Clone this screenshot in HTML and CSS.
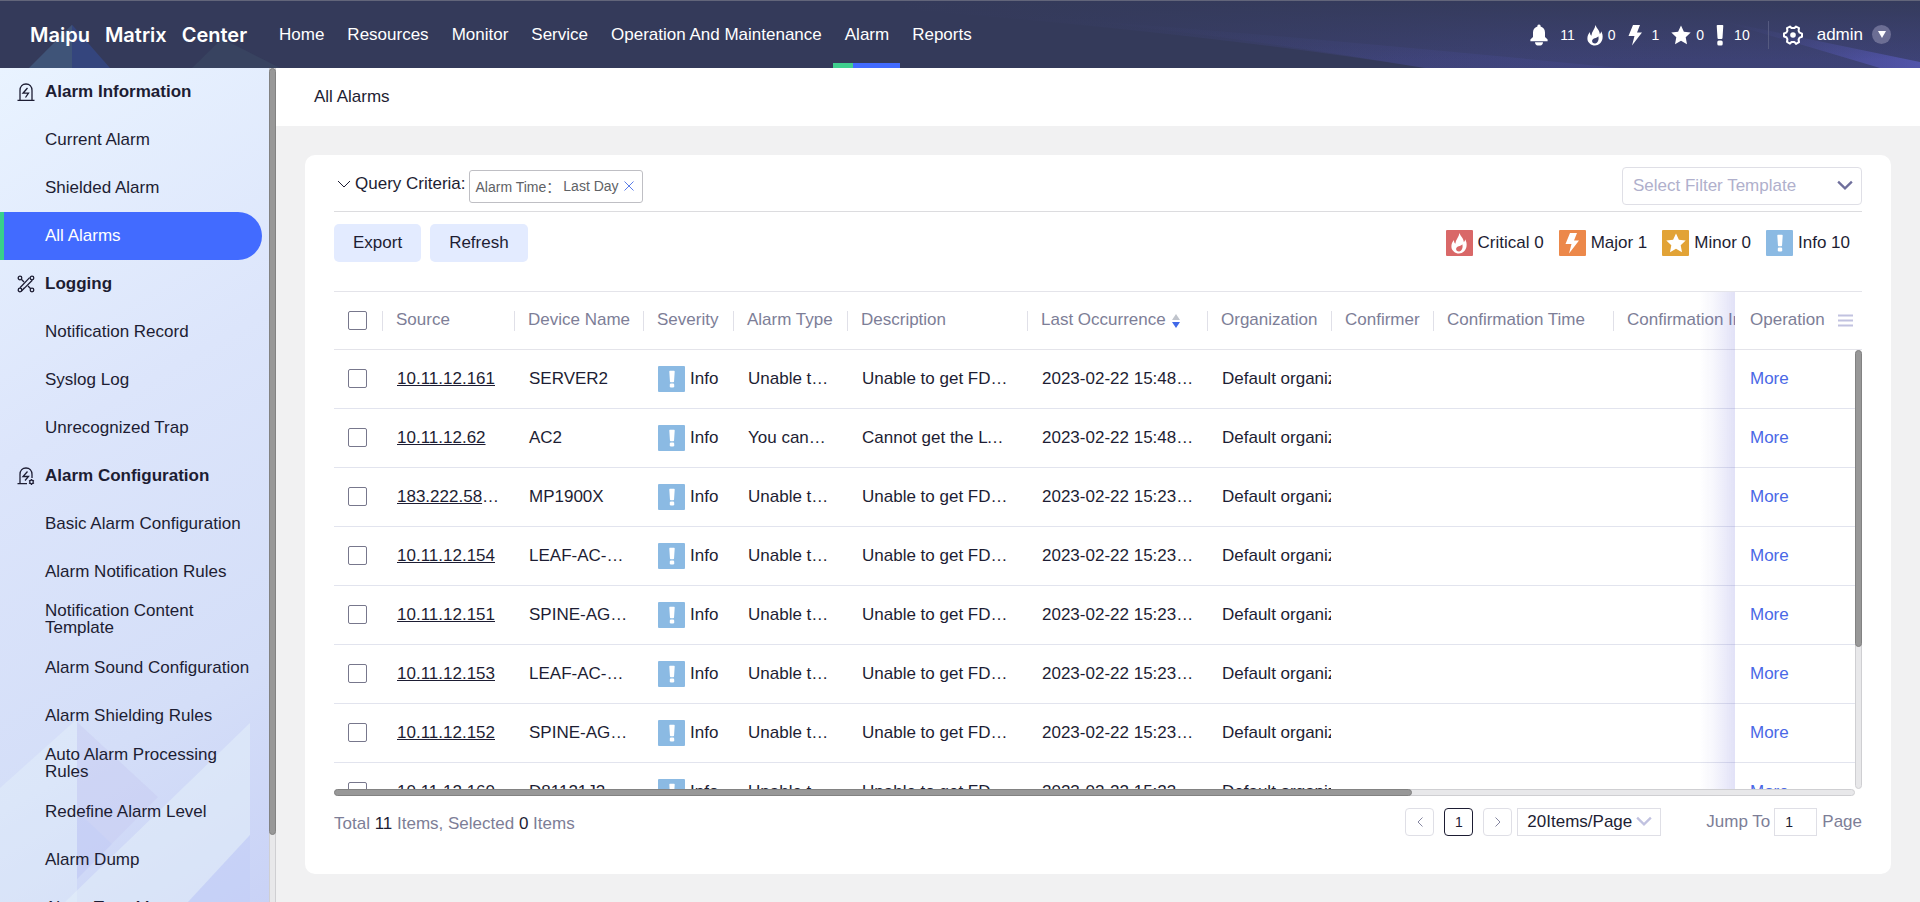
FILE: index.html
```html
<!DOCTYPE html>
<html lang="en">
  <head>
    <meta charset="UTF-8" />
    <meta name="viewport" content="width=device-width, initial-scale=1.0" />
    <title>Maipu Matrix Center</title>
    <link rel="stylesheet" href="styles.css" />
  </head>
  <body>
    <!-- shared icons -->
    <svg class="sprite" aria-hidden="true">
      <symbol id="i-bell" viewBox="0 0 18 22">
        <path d="M9 0.5a1.6 1.6 0 0 1 1.6 1.9C13.6 3.2 15 5.6 15 8.6V13l2.6 2.6v1.6H0.4v-1.6L3 13V8.6c0-3 1.400-5.400 4.400-6.200A1.600 1.600 0 0 1 9 0.500zM5 18.300h8c0 2-1.200 3.200-2.600 3.200H7.600C6.200 21.500 5 20.300 5 18.300z" />
      </symbol>
      <symbol id="i-flame" viewBox="0 0 16 22">
        <path d="M8.500 1c0.800 3 4.200 5.200 4.300 9 0.900-0.700 1.300-1.500 1.400-2.700C15.300 9.500 16 11.600 15.500 14.500 14.800 18.600 11.800 21.500 8 21.500S0.500 18.600 0.400 14.700C0.300 12 1.300 9.800 3 8c0 1.800 0.300 2.800 1.300 3.700C4.800 7.500 8 5 8.500 1zM11.300 12.300c-0.700 1.300-2.200 1.500-3.700 2-1.700 0.600-2.600 1.700-2.500 3 0.200 1.500 1.500 2.300 3 2.200 2.600-0.200 4.200-3.700 3.200-7.200z" />
      </symbol>
      <symbol id="i-bolt" viewBox="0 0 14 22">
        <path d="M5 1h7L9 8.500h5L4 21.500l2.500-9.500H0.500z" />
      </symbol>
      <symbol id="i-star" viewBox="0 0 20 20">
        <path d="M10 0.500l2.900 6.300 6.800 0.800-5 4.700 1.300 6.900L10 15.800l-6 3.400 1.300-6.900-5-4.700 6.800-0.800z" />
      </symbol>
      <symbol id="i-mark" viewBox="0 0 8 22">
        <path d="M1.500 1h5a0.800 0.800 0 0 1 0.800 0.800L6.500 14a1 1 0 0 1-1 0.900h-3a1 1 0 0 1-1-0.900L0.700 1.800A0.800 0.800 0 0 1 1.500 1z" />
        <rect x="1.300" y="16.500" width="5.400" height="5" rx="1.500" />
      </symbol>
      <symbol id="i-down" viewBox="0 0 14 10">
        <path d="M1 2l6 6 6-6" fill="none" stroke="currentColor" />
      </symbol>
    </svg>

    <header class="topbar">
      <svg class="topbar-art" viewBox="0 0 1920 68" preserveAspectRatio="none" aria-hidden="true">
        <defs>
          <linearGradient id="beam" x1="0" x2="1">
            <stop offset="0" stop-color="#4c4fa0" stop-opacity="0" />
            <stop offset="0.6" stop-color="#4c4fa0" stop-opacity="0.35" />
            <stop offset="1" stop-color="#4c4fa0" stop-opacity="0.4" />
          </linearGradient>
          <linearGradient id="corner" x1="0" x2="1">
            <stop offset="0" stop-color="#5a5cc0" stop-opacity="0" />
            <stop offset="1" stop-color="#5a5cc0" stop-opacity="0.7" />
          </linearGradient>
          <linearGradient id="shade" x1="0" y1="0" x2="0" y2="1">
            <stop offset="0" stop-color="#343a5a" stop-opacity="0.9" />
            <stop offset="1" stop-color="#343a5a" stop-opacity="0" />
          </linearGradient>
        </defs>
        <path d="M29 68L72 24V68z" fill="#3f5478" />
        <path d="M72 24L110 68H72z" fill="#34457d" />
        <path d="M192 68L222 38L280 68z" fill="#384360" />
        <path d="M900 8Q1200 32 1425 68H1920V0H900z" fill="url(#beam)" />
        <path d="M1060 18Q1300 36 1620 68H1425Q1240 36 1060 18z" fill="url(#beam)" fill-opacity="0.6" />
        <path d="M1720 20L1920 62V68H1880Q1800 44 1720 20z" fill="url(#corner)" />
        <path d="M900 0H1920V60H900z" fill="url(#shade)" />
      </svg>
      <div class="logo"><span>Maipu</span><span>Matrix</span><span>Center</span></div>
      <nav class="mainnav">
        <a href="#">Home</a>
        <a href="#">Resources</a>
        <a href="#">Monitor</a>
        <a href="#">Service</a>
        <a href="#">Operation And Maintenance</a>
        <a href="#" class="active">Alarm</a>
        <a href="#">Reports</a>
      </nav>
      <div class="counters">
        <span class="counter counter-all"><svg width="18" height="22"><use href="#i-bell" /></svg>11</span>
        <span class="counter"><svg width="16" height="22"><use href="#i-flame" /></svg>0</span>
        <span class="counter counter-wide"><svg width="14" height="22"><use href="#i-bolt" /></svg>1</span>
        <span class="counter"><svg width="20" height="20"><use href="#i-star" /></svg>0</span>
        <span class="counter counter-wide"><svg width="8" height="22"><use href="#i-mark" /></svg>10</span>
      </div>
      <div class="user">
        <button class="icon-btn" aria-label="Settings">
          <svg width="20" height="20" viewBox="0 0 20 20">
            <path d="M7 1.500L8.500 3h3L13 1.500l3 1.700-0.400 2.600 1 1.900 2.400 1v3l-2.400 0.900-1 1.900 0.400 2.600-3 1.800L11.500 17h-3L7 18.600l-3-1.800 0.400-2.600-1-1.900L1 11.500v-3l2.400-0.900 1-1.800L4 3.200z" fill="none" stroke="#fff" stroke-width="2" stroke-linejoin="round" />
            <circle cx="10" cy="10" r="2.800" fill="#fff" />
          </svg>
        </button>
        <span>admin</span>
        <button class="user-toggle" aria-label="User menu">
          <svg width="8" height="7" viewBox="0 0 8 7"><path d="M0 0h8L4 7z" fill="#fff" /></svg>
        </button>
      </div>
    </header>

    <div class="layout">
      <aside class="sidebar">
        <svg class="sidebar-art" viewBox="0 0 269 183" aria-hidden="true">
          <path d="M0 69L77 0V183H0z" fill="#e6f2fa" fill-opacity="0.4" />
          <path d="M77 3L158 78L77 160z" fill="#c6c8f0" fill-opacity="0.4" />
          <path d="M77 92L112 125L77 160z" fill="#bccbf8" fill-opacity="0.3" />
          <path d="M65 183L250 4V116L188 183z" fill="#e6f2fa" fill-opacity="0.5" />
          <path d="M250 116V183H188z" fill="#bccbf8" fill-opacity="0.3" />
        </svg>
        <ul class="menu">
          <li class="menu-title">
            <svg width="18" height="20" viewBox="0 0 18 20"><path d="M3 18V8.500C3 4.500 5.500 2 9 2s6 2.500 6 6.500V18M0.500 18.300h17M10.500 6L6 11.200h5.500L8.500 15.500" /></svg>
            Alarm Information
          </li>
          <li><a href="#">Current Alarm</a></li>
          <li><a href="#">Shielded Alarm</a></li>
          <li><a href="#" class="active">All Alarms</a></li>
          <li class="menu-title">
            <svg width="18" height="20" viewBox="0 0 18 20"><circle cx="3" cy="4" r="1.800" /><circle cx="15" cy="4" r="1.800" /><circle cx="3" cy="16" r="1.800" /><circle cx="15" cy="16" r="1.800" /><path d="M4.300 5.300L7 8M11 12l2.700 2.700M12.600 3.600L3 13.800M15.300 6.200L5.200 16.400M4.500 17l3-3.200" /></svg>
            Logging
          </li>
          <li><a href="#">Notification Record</a></li>
          <li><a href="#">Syslog Log</a></li>
          <li><a href="#">Unrecognized Trap</a></li>
          <li class="menu-title">
            <svg width="18" height="20" viewBox="0 0 18 20"><path d="M3 17.500V8.500C3 4.500 5.500 2 9 2s6 2.500 6 6.500V12M0.500 17.700h9.500M10.500 5.500L6 10.500h5.500L8 14.500" /><circle cx="14.500" cy="16" r="1.800" /><path d="M14.500 13v1M14.500 18v1M12 14.500l0.800 0.500M17 14.500l-0.800 0.500M12 17.500l0.800-0.500M17 17.500l-0.800-0.500" /></svg>
            Alarm Configuration
          </li>
          <li><a href="#">Basic Alarm Configuration</a></li>
          <li><a href="#">Alarm Notification Rules</a></li>
          <li><a href="#">Notification Content Template</a></li>
          <li><a href="#">Alarm Sound Configuration</a></li>
          <li><a href="#">Alarm Shielding Rules</a></li>
          <li><a href="#">Auto Alarm Processing Rules</a></li>
          <li><a href="#">Redefine Alarm Level</a></li>
          <li><a href="#">Alarm Dump</a></li>
          <li><a href="#">Alarm Type Management</a></li>
        </ul>
        <div class="bar bar-side"><div class="thumb"></div></div>
      </aside>

      <main class="main">
        <h1 class="page-title">All Alarms</h1>

        <section class="card">
          <div class="query">
            <div class="query-label">
              <svg width="14" height="10"><use href="#i-down" width="14" height="10" /></svg>
              Query Criteria:
            </div>
            <span class="tag">
              Alarm Time：<span>Last Day</span>
              <button class="icon-btn" aria-label="Remove">
                <svg width="10" height="10" viewBox="0 0 10 10"><path d="M0.500 0.500l9 9M9.500 0.500l-9 9" stroke="#5b7de8" /></svg>
              </button>
            </span>
            <div class="select select-template">
              <select aria-label="Filter template">
                <option>Select Filter Template</option>
              </select>
              <svg width="16" height="12"><use href="#i-down" width="16" height="12" /></svg>
            </div>
          </div>

          <div class="toolbar">
            <button class="btn">Export</button>
            <button class="btn">Refresh</button>
            <div class="legend">
              <span><i class="level critical"><svg width="18" height="22"><use href="#i-flame" /></svg></i>Critical 0</span>
              <span><i class="level major"><svg width="16" height="22"><use href="#i-bolt" /></svg></i>Major 1</span>
              <span><i class="level minor"><svg width="20" height="20"><use href="#i-star" /></svg></i>Minor 0</span>
              <span><i class="level info"><svg width="8" height="18"><use href="#i-mark" /></svg></i>Info 10</span>
            </div>
          </div>

          <div class="table-wrap">
            <div class="table-scroll">
              <table class="alarms">
                <colgroup>
                  <col class="c-check" />
                  <col class="c-source" />
                  <col class="c-device" />
                  <col class="c-severity" />
                  <col class="c-type" />
                  <col class="c-desc" />
                  <col class="c-last" />
                  <col class="c-org" />
                  <col class="c-confirmer" />
                  <col class="c-ctime" />
                  <col />
                  <col class="c-op" />
                </colgroup>
                <thead>
                  <tr>
                    <th class="check"><input type="checkbox" aria-label="Select all" /></th>
                    <th>Source</th>
                    <th>Device Name</th>
                    <th>Severity</th>
                    <th>Alarm Type</th>
                    <th>Description</th>
                    <th>
                      Last Occurrence
                      <svg class="sort" width="8" height="14" viewBox="0 0 8 14"><path d="M4 0l4 6H0z" fill="#c0c4cc" /><path d="M0 8h8l-4 6z" fill="#4169e8" /></svg>
                    </th>
                    <th>Organization</th>
                    <th>Confirmer</th>
                    <th>Confirmation Time</th>
                    <th>Confirmation Info</th>
                    <th class="op">
                      Operation
                      <button class="icon-btn columns" aria-label="Columns">
                        <svg width="15" height="13" viewBox="0 0 15 13"><path d="M0 1.500h15M0 6.500h15M0 11.500h15" stroke="#c1c2e0" stroke-width="2" /></svg>
                      </button>
                    </th>
                  </tr>
                </thead>
                <tbody id="alarmRows"></tbody>
              </table>
            </div>
            <div class="bar bar-y"><div class="thumb"></div></div>
          </div>
          <div class="bar bar-x"><div class="thumb"></div></div>

          <div class="pager">
            <p class="total">Total <b>11</b> Items, Selected <b>0</b> Items</p>
            <button class="page-btn" aria-label="Previous page">
              <svg width="6" height="10" viewBox="0 0 6 10"><path d="M5.500 0.500L1 5l4.500 4.500" fill="none" stroke="#8586a0" /></svg>
            </button>
            <button class="page-btn current">1</button>
            <button class="page-btn" aria-label="Next page">
              <svg width="6" height="10" viewBox="0 0 6 10"><path d="M0.500 0.500L5 5l-4.500 4.500" fill="none" stroke="#8586a0" /></svg>
            </button>
            <div class="select select-size">
              <select aria-label="Page size">
                <option>20Items/Page</option>
              </select>
              <svg width="16" height="12"><use href="#i-down" width="16" height="12" /></svg>
            </div>
            <label for="jump">Jump To</label>
            <input type="text" id="jump" value="1" />
            <span>Page</span>
          </div>
        </section>
      </main>
    </div>
    <script src="script.js"></script>
  </body>
</html>
```

FILE: styles.css
```css
* {
  box-sizing: border-box;
}
body {
  margin: 0;
  height: 100vh;
  display: flex;
  flex-direction: column;
  overflow: hidden;
  font-family: "Liberation Sans", Arial, "Noto Sans CJK SC", sans-serif;
  font-size: 17px;
  color: #1d1d33;
  background-color: #f1f1f2;
}
a {
  color: inherit;
  text-decoration: none;
}
button,
input,
select {
  font: inherit;
  color: inherit;
}
.sprite {
  position: absolute;
  width: 0;
  height: 0;
}
.icon-btn {
  display: inline-flex;
  padding: 0;
  border: none;
  background: none;
  cursor: pointer;
}

/* top bar */
.topbar {
  position: relative;
  flex: none;
  height: 68px;
  display: flex;
  align-items: center;
  padding: 0 29px 0 30px;
  border-top: 1px solid #62657a;
  background-color: #343a5a;
  color: #ffffff;
}
.topbar > * {
  position: relative;
}
.topbar .topbar-art {
  position: absolute;
  inset: 0;
  width: 100%;
  height: 100%;
}
.logo {
  display: flex;
  gap: 15px;
  width: 237px;
  font-family: Inter, sans-serif;
  font-size: 20px;
  font-weight: 600;
}
.mainnav {
  display: flex;
  align-self: stretch;
}
.mainnav a {
  position: relative;
  display: flex;
  align-items: center;
  padding: 0 11px 0 12px;
}
.mainnav a.active::after {
  content: "";
  position: absolute;
  left: 0;
  right: 0;
  bottom: 0;
  height: 5px;
  background: linear-gradient(90deg, #3fcf8e 20px, #426bff 20px);
}
.counters {
  display: flex;
  align-items: center;
  gap: 12px;
  margin-left: auto;
  padding-right: 18px;
  font-size: 14px;
}
.counter {
  display: flex;
  align-items: center;
  gap: 5px;
}
.counter-wide {
  gap: 10px;
}
.counter-all {
  gap: 12px;
}
.counter svg {
  fill: #ffffff;
}
.user {
  display: flex;
  align-items: center;
  padding-left: 14px;
  border-left: 1px solid #555a80;
  height: 28px;
}
.user span {
  margin: 0 9px 0 14px;
}
.user-toggle {
  display: flex;
  align-items: center;
  justify-content: center;
  width: 19px;
  height: 19px;
  padding: 0;
  border: none;
  border-radius: 50%;
  background-color: #6c6e94;
}

.layout {
  flex: 1;
  min-height: 0;
  display: flex;
}

/* drawn scrollbars */
.bar {
  border: 1px solid #cfcfd2;
  border-radius: 4px;
  background-color: #e8e8ea;
}
.thumb {
  border: 1px solid #828282;
  border-radius: 4px;
  background-color: #989898;
}

/* sidebar */
.sidebar {
  position: relative;
  flex: none;
  width: 276px;
  overflow: hidden;
  background: linear-gradient(150deg, #e9f3ff 0%, #dce5fb 40%, #d4def8 75%, #c9d2f6 100%);
}
.sidebar-art {
  position: absolute;
  left: 0;
  bottom: 0;
  width: 269px;
}
.menu {
  position: relative;
  list-style-type: none;
  margin: 0;
  padding: 0 14px 0 0;
}
.menu-title {
  display: flex;
  align-items: center;
  gap: 10px;
  height: 48px;
  padding-left: 17px;
  font-weight: bold;
}
.menu-title svg {
  fill: none;
  stroke: #1d1d33;
  stroke-width: 1.3;
}
.menu a {
  display: flex;
  align-items: center;
  height: 48px;
  padding: 0 0 2px 45px;
  line-height: 17px;
}
.menu a.active {
  padding-left: 41px;
  border-left: 4px solid #38cf8c;
  border-radius: 0 24px 24px 0;
  background-color: #426bff;
  color: #ffffff;
}
.bar-side {
  position: absolute;
  top: 0;
  right: 0;
  bottom: 0;
  width: 7px;
  border-radius: 0;
  border-top: none;
  border-bottom: none;
}
.bar-side .thumb {
  height: 92%;
  margin: 0 -1px;
}

/* content */
.main {
  flex: 1;
  min-width: 0;
  display: flex;
  flex-direction: column;
}
.page-title {
  margin: 0;
  padding: 0 38px;
  font-size: 17px;
  font-weight: normal;
  line-height: 58px;
  background-color: #ffffff;
}
.card {
  flex: 1;
  min-height: 0;
  display: flex;
  flex-direction: column;
  margin: 29px 29px 28px;
  padding: 0 29px;
  border-radius: 10px;
  background-color: #ffffff;
}
.query {
  display: flex;
  align-items: center;
  height: 57px;
  padding: 8px 0 2px 3px;
  border-bottom: 1px solid #dcdcdf;
}
.query-label {
  display: flex;
  align-items: center;
  gap: 4px;
  margin-right: 3px;
  padding-bottom: 4px;
}
.tag {
  display: flex;
  align-items: center;
  gap: 5px;
  height: 33px;
  padding: 0 8px 0 6px;
  border: 1px solid #bfbfc4;
  border-radius: 3px;
  font-size: 14px;
  color: #606266;
}
.tag span {
  margin-left: -2px;
}
.select {
  position: relative;
}
.select select {
  appearance: none;
  width: 100%;
  height: 100%;
  padding: 0 10px 2px;
  border: 1px solid #dfdfe6;
  border-radius: 4px;
  background-color: #ffffff;
}
.select svg {
  position: absolute;
  top: 50%;
  right: 9px;
  margin-top: -7px;
  pointer-events: none;
  stroke-width: 2;
}
.select-template {
  width: 240px;
  height: 38px;
  margin-left: auto;
  color: #b0b0cc;
}
.select-template svg {
  color: #6f6f9c;
}
.toolbar {
  display: flex;
  align-items: center;
  gap: 9px;
  height: 79px;
  padding: 12px 12px 29px 0;
}
.btn {
  height: 38px;
  padding: 0 19px;
  border: none;
  border-radius: 5px;
  background-color: #e3ebff;
  cursor: pointer;
}
.legend {
  display: flex;
  gap: 15px;
  margin-left: auto;
}
.legend span {
  display: flex;
  align-items: center;
  gap: 5px;
}
.level {
  display: inline-flex;
  align-items: center;
  justify-content: center;
  width: 27px;
  height: 26px;
  border-radius: 1px;
}
.level svg {
  fill: #ffffff;
}
.critical {
  background-color: #d96868;
}
.major {
  background-color: #ec884a;
}
.minor {
  background-color: #e2a336;
}
.info {
  background-color: #8bbae3;
}

/* alarm table */
.table-wrap {
  position: relative;
  flex: 1;
  min-height: 0;
}
.table-scroll {
  height: 100%;
  overflow: auto;
  scrollbar-width: none;
}
.alarms {
  width: 2155px;
  table-layout: fixed;
  border-spacing: 0;
}
.c-check {
  width: 48px;
}
.c-source {
  width: 132px;
}
.c-device {
  width: 129px;
}
.c-severity {
  width: 90px;
}
.c-type {
  width: 114px;
}
.c-desc,
.c-last {
  width: 180px;
}
.c-org {
  width: 124px;
}
.c-confirmer {
  width: 102px;
}
.c-ctime {
  width: 180px;
}
.c-op {
  width: 127px;
}
.alarms th {
  position: sticky;
  top: 0;
  z-index: 1;
  height: 59px;
  padding: 0 0 2px 14px;
  border-top: 1px solid #e4e4ea;
  border-bottom: 1px solid #e4e4ea;
  background-color: #ffffff;
  color: #7d7e97;
  font-weight: normal;
  text-align: left;
  white-space: nowrap;
}
/* short divider in front of each heading */
.alarms th:not(.check):not(.op) {
  background: linear-gradient(#e0e0e8, #e0e0e8) 0 50% / 1px 20px no-repeat #ffffff;
}
.alarms td {
  height: 59px;
  padding: 0 13px 1px 15px;
  border-bottom: 1px solid #e2e4ee;
  background-color: #ffffff;
  overflow: hidden;
  text-overflow: ellipsis;
  white-space: nowrap;
}
.alarms td a {
  text-decoration: underline;
}
.alarms .check {
  padding: 0 0 1px 14px;
}
.alarms input {
  display: block;
  appearance: none;
  width: 19px;
  height: 19px;
  margin: 0;
  border: 1px solid #77778c;
  border-radius: 2px;
  background-color: #ffffff;
}
.alarms .cut {
  padding-right: 0;
  text-overflow: clip;
}
.severity {
  display: flex;
  align-items: center;
  gap: 5px;
}
.sort {
  margin-left: 2px;
  vertical-align: -3px;
}
.alarms .op {
  position: sticky;
  right: 0;
  padding-left: 15px;
  overflow: visible;
}
.alarms th.op {
  z-index: 2;
}
.alarms .op::before {
  content: "";
  position: absolute;
  top: 0;
  bottom: -1px;
  left: -36px;
  width: 36px;
  background: linear-gradient(90deg, rgba(90, 90, 210, 0), rgba(90, 90, 210, 0.05) 40%, rgba(90, 90, 210, 0.18));
  pointer-events: none;
}
.alarms td.op button {
  padding: 0;
  border: none;
  background: none;
  color: #4a68e6;
  cursor: pointer;
}
.columns {
  margin-left: 9px;
  vertical-align: -2px;
}
.bar-y {
  position: absolute;
  top: 59px;
  right: 0;
  bottom: 0;
  width: 7px;
  z-index: 3;
}
.bar-y .thumb {
  height: 68%;
  margin: -1px;
}
.bar-x {
  flex: none;
  height: 7px;
  margin-right: 7px;
}
.bar-x .thumb {
  width: 71%;
  height: 7px;
  margin: -1px;
}

/* pager */
.pager {
  display: flex;
  align-items: center;
  height: 78px;
  padding: 12px 0 38px;
  color: #7d7e97;
}
.total {
  margin: 0 auto 0 0;
  padding-top: 3px;
}
.total b {
  color: #1d1d33;
  font-weight: normal;
}
.page-btn {
  display: flex;
  align-items: center;
  justify-content: center;
  width: 29px;
  height: 28px;
  margin-right: 10px;
  padding: 0;
  border: 1px solid #dfdfe6;
  border-radius: 4px;
  background-color: #ffffff;
  font-size: 14px;
}
.page-btn:last-of-type {
  margin-right: 5px;
}
.page-btn.current {
  border-color: #1d1d33;
  color: #1d1d33;
}
.select-size {
  width: 144px;
  height: 28px;
  margin-right: 45px;
  color: #1d1d33;
}
.select-size select {
  padding-left: 9px;
  border-radius: 0;
}
.select-size svg {
  color: #c1c2e0;
}
.pager input {
  width: 43px;
  height: 28px;
  margin: 0 5px 0 4px;
  padding: 0 10px;
  border: 1px solid #dfdfe6;
  color: #1d1d33;
  font-size: 14px;
}
```

FILE: script.js
```js
// source, device, alarm type, description, last occurrence
var alarms = [
  ["10.11.12.161", "SERVER2", "Unable to get data", "Unable to get FDB table", "2023-02-22 15:48:36"],
  ["10.11.12.62", "AC2", "You cannot get data", "Cannot get the LWAPP state", "2023-02-22 15:48:21"],
  ["183.222.58.101", "MP1900X", "Unable to get data", "Unable to get FDB table", "2023-02-22 15:23:50"],
  ["10.11.12.154", "LEAF-AC-154", "Unable to get data", "Unable to get FDB table", "2023-02-22 15:23:48"],
  ["10.11.12.151", "SPINE-AGG-151", "Unable to get data", "Unable to get FDB table", "2023-02-22 15:23:47"],
  ["10.11.12.153", "LEAF-AC-153", "Unable to get data", "Unable to get FDB table", "2023-02-22 15:23:45"],
  ["10.11.12.152", "SPINE-AGG-152", "Unable to get data", "Unable to get FDB table", "2023-02-22 15:23:44"],
  ["10.11.12.160", "D81121J2", "Unable to get data", "Unable to get FDB table", "2023-02-22 15:23:42"],
];

function cell(text, className) {
  return '<td class="' + (className || "") + '">' + text + "</td>";
}

// Fill the table body
document.getElementById("alarmRows").innerHTML = alarms
  .map(function (row) {
    return (
      "<tr>" +
      cell('<input type="checkbox" aria-label="Select ' + row[0] + '" />', "check") +
      cell('<a href="#">' + row[0] + "</a>") +
      cell(row[1]) +
      cell('<span class="severity"><i class="level info"><svg width="8" height="18"><use href="#i-mark" /></svg></i>Info</span>') +
      cell(row[2]) +
      cell(row[3]) +
      cell(row[4]) +
      cell("Default organization", "cut") +
      cell("") +
      cell("") +
      cell("") +
      cell('<button type="button">More</button>', "op") +
      "</tr>"
    );
  })
  .join("");
```
